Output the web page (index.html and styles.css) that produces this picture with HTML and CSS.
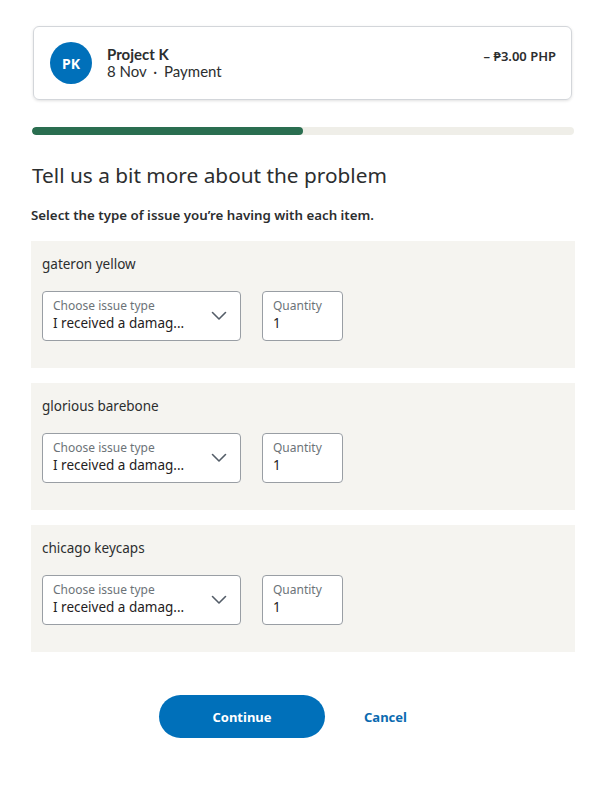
FILE: index.html
```html
<!DOCTYPE html>
<html lang="en">
<head>
<meta charset="utf-8">
<link rel="stylesheet" href="styles.css">
</head>
<body>
<main class="page">
  <section class="txn-card">
    <div class="avatar">PK</div>
    <div class="txn-info">
      <div class="txn-name">Project K</div>
      <div class="txn-meta">8 Nov <span class="dot">·</span> Payment</div>
    </div>
    <div class="txn-amount">– ₱3.00 PHP</div>
  </section>

  <div class="progress"><div class="progress-fill" style="width:50%"></div></div>

  <h1 class="title">Tell us a bit more about the problem</h1>
  <p class="subtitle">Select the type of issue you’re having with each item.</p>

  <div class="items">
    <div class="item">
      <div class="item-name">gateron yellow</div>
      <div class="fields">
        <div class="field select">
          <div class="field-label">Choose issue type</div>
          <div class="field-value">I received a damag...</div>
          <svg class="chevron" width="16" height="10" viewBox="0 0 16 10"><path d="M1.5 1.5 L8 8 L14.5 1.5" fill="none" stroke="#545d68" stroke-width="1.6" stroke-linecap="round" stroke-linejoin="round"/></svg>
        </div>
        <div class="field qty">
          <div class="field-label">Quantity</div>
          <div class="field-value">1</div>
        </div>
      </div>
    </div>
    <div class="item">
      <div class="item-name">glorious barebone</div>
      <div class="fields">
        <div class="field select">
          <div class="field-label">Choose issue type</div>
          <div class="field-value">I received a damag...</div>
          <svg class="chevron" width="16" height="10" viewBox="0 0 16 10"><path d="M1.5 1.5 L8 8 L14.5 1.5" fill="none" stroke="#545d68" stroke-width="1.6" stroke-linecap="round" stroke-linejoin="round"/></svg>
        </div>
        <div class="field qty">
          <div class="field-label">Quantity</div>
          <div class="field-value">1</div>
        </div>
      </div>
    </div>
    <div class="item">
      <div class="item-name">chicago keycaps</div>
      <div class="fields">
        <div class="field select">
          <div class="field-label">Choose issue type</div>
          <div class="field-value">I received a damag...</div>
          <svg class="chevron" width="16" height="10" viewBox="0 0 16 10"><path d="M1.5 1.5 L8 8 L14.5 1.5" fill="none" stroke="#545d68" stroke-width="1.6" stroke-linecap="round" stroke-linejoin="round"/></svg>
        </div>
        <div class="field qty">
          <div class="field-label">Quantity</div>
          <div class="field-value">1</div>
        </div>
      </div>
    </div>
  </div>

  <div class="actions">
    <button class="btn-primary">Continue</button>
    <button class="btn-link">Cancel</button>
  </div>
</main>
</body>
</html>
```
FILE: styles.css
```css
* { box-sizing: border-box; }
html, body { margin: 0; padding: 0; background: #fff; }
body {
  font-family: "Noto Sans", "Open Sans", sans-serif;
  color: #2c2e2f;
}
.page {
  width: 544px;
  margin-left: 31px;
  padding-top: 26px;
}
.txn-card {
  margin: 0 3px 0 2px;
  height: 74px;
  border: 1px solid #d3d6da;
  border-radius: 6px;
  box-shadow: 0 1px 3px rgba(0,0,0,0.12);
  display: flex;
  align-items: flex-start;
  padding: 15px 15px 0 16px;
}
.avatar {
  width: 42px; height: 42px;
  border-radius: 50%;
  background: #0070ba;
  color: #fff;
  font-weight: 700;
  font-size: 14px;
  display: flex; align-items: center; justify-content: center;
  flex-shrink: 0;
}
.txn-info {
  margin-left: 15px;
  margin-top: 4px;
  flex: 1;
  font-family: "Lato", "Noto Sans", sans-serif;
}
.txn-name { font-size: 15px; font-weight: 700; line-height: 17px; color: #2c2e2f; }
.txn-meta { font-size: 15px; line-height: 17px; color: #2c2e2f; }
.dot { margin: 0 3px; }
.txn-amount { font-size: 13px; font-weight: 600; margin-top: 5px; color: #2c2e2f; }

.progress {
  margin: 27px 1px 0 1px;
  height: 8px;
  border-radius: 4px;
  background: #efeee8;
  overflow: hidden;
}
.progress-fill { height: 100%; background: #2a6e50; border-radius: 4px; }

.title {
  margin: 26px 0 0 1px;
  font-size: 20.8px;
  font-weight: 400;
  line-height: 28px;
  color: #2c2e2f;
}
.subtitle {
  margin: 17px 0 0 0;
  font-size: 13.3px;
  font-weight: 600;
  line-height: 18px;
}
.items {
  margin-top: 17px;
  display: flex;
  flex-direction: column;
  gap: 15px;
}
.item {
  background: #f5f4f0;
  height: 127px;
  padding: 14px 11px 0 11px;
}
.item-name { font-size: 13.5px; line-height: 18px; color: #2c2e2f; }
.fields { display: flex; gap: 21px; margin-top: 18px; }
.field {
  position: relative;
  height: 50px;
  background: #fff;
  border: 1px solid #999ea4;
  border-radius: 4px;
  padding: 6px 10px 0 10px;
}
.select { width: 199px; }
.qty { width: 81px; }
.field-label { font-size: 12px; line-height: 16px; color: #6c7378; }
.field-value { font-size: 13.5px; line-height: 18px; color: #1f2122; }
.chevron { position: absolute; right: 13px; top: 19px; }

.actions {
  margin-top: 43px;
  display: flex;
  align-items: center;
  padding-left: 128px;
}
.btn-primary {
  width: 166px; height: 43px;
  border: none; border-radius: 22px;
  background: #0070ba;
  color: #fff;
  font-family: inherit;
  font-size: 13px; font-weight: 700;
}
.btn-link {
  margin-left: 31px;
  border: none; background: none; padding: 0 8px;
  color: #0a6ab0;
  font-family: inherit;
  font-size: 13px; font-weight: 700;
}
```
